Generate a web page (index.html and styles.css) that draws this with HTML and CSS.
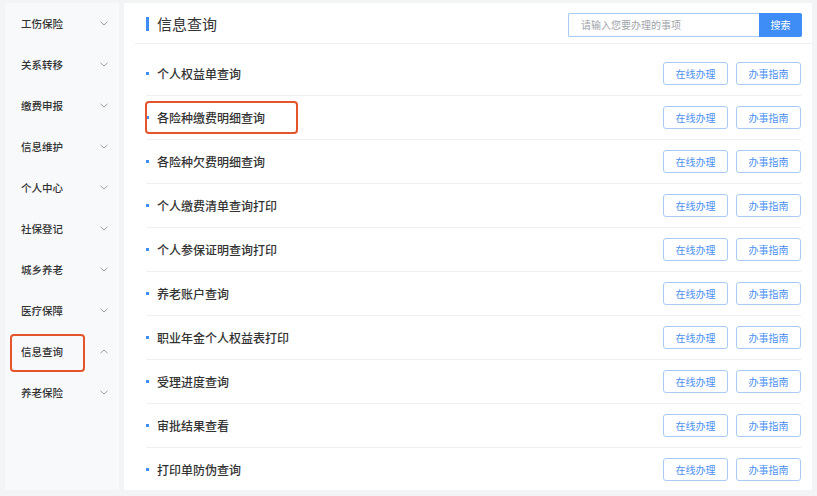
FILE: index.html
```html
<!DOCTYPE html>
<html lang="zh-CN">
<head>
<meta charset="utf-8">
<title>信息查询</title>
<link rel="stylesheet" href="styles.css">
</head>
<body>
<div class="page">
  <aside class="sidebar">
    <ul class="menu">
      <li class="menu-item"><span>工伤保险</span><svg class="chev" viewBox="0 0 8 5"><path d="M0.5 0.8 L4 4 L7.5 0.8"/></svg></li>
      <li class="menu-item"><span>关系转移</span><svg class="chev" viewBox="0 0 8 5"><path d="M0.5 0.8 L4 4 L7.5 0.8"/></svg></li>
      <li class="menu-item"><span>缴费申报</span><svg class="chev" viewBox="0 0 8 5"><path d="M0.5 0.8 L4 4 L7.5 0.8"/></svg></li>
      <li class="menu-item"><span>信息维护</span><svg class="chev" viewBox="0 0 8 5"><path d="M0.5 0.8 L4 4 L7.5 0.8"/></svg></li>
      <li class="menu-item"><span>个人中心</span><svg class="chev" viewBox="0 0 8 5"><path d="M0.5 0.8 L4 4 L7.5 0.8"/></svg></li>
      <li class="menu-item"><span>社保登记</span><svg class="chev" viewBox="0 0 8 5"><path d="M0.5 0.8 L4 4 L7.5 0.8"/></svg></li>
      <li class="menu-item"><span>城乡养老</span><svg class="chev" viewBox="0 0 8 5"><path d="M0.5 0.8 L4 4 L7.5 0.8"/></svg></li>
      <li class="menu-item"><span>医疗保障</span><svg class="chev" viewBox="0 0 8 5"><path d="M0.5 0.8 L4 4 L7.5 0.8"/></svg></li>
      <li class="menu-item active"><span>信息查询</span><svg class="chev" viewBox="0 0 8 5"><path d="M0.5 4.2 L4 1 L7.5 4.2"/></svg><i class="mark mark-side"></i></li>
      <li class="menu-item"><span>养老保险</span><svg class="chev" viewBox="0 0 8 5"><path d="M0.5 0.8 L4 4 L7.5 0.8"/></svg></li>
    </ul>
  </aside>
  <main class="panel">
    <header class="panel-head">
      <h1 class="title">信息查询</h1>
      <form class="search">
        <input class="search-input" type="text" placeholder="请输入您要办理的事项">
        <button class="search-btn" type="button">搜索</button>
      </form>
    </header>
    <ul class="list">
      <li class="row"><span class="name">个人权益单查询</span><div class="ops"><a class="btn">在线办理</a><a class="btn">办事指南</a></div></li>
      <li class="row"><span class="name">各险种缴费明细查询</span><i class="mark mark-row"></i><div class="ops"><a class="btn">在线办理</a><a class="btn">办事指南</a></div></li>
      <li class="row"><span class="name">各险种欠费明细查询</span><div class="ops"><a class="btn">在线办理</a><a class="btn">办事指南</a></div></li>
      <li class="row"><span class="name">个人缴费清单查询打印</span><div class="ops"><a class="btn">在线办理</a><a class="btn">办事指南</a></div></li>
      <li class="row"><span class="name">个人参保证明查询打印</span><div class="ops"><a class="btn">在线办理</a><a class="btn">办事指南</a></div></li>
      <li class="row"><span class="name">养老账户查询</span><div class="ops"><a class="btn">在线办理</a><a class="btn">办事指南</a></div></li>
      <li class="row"><span class="name">职业年金个人权益表打印</span><div class="ops"><a class="btn">在线办理</a><a class="btn">办事指南</a></div></li>
      <li class="row"><span class="name">受理进度查询</span><div class="ops"><a class="btn">在线办理</a><a class="btn">办事指南</a></div></li>
      <li class="row"><span class="name">审批结果查看</span><div class="ops"><a class="btn">在线办理</a><a class="btn">办事指南</a></div></li>
      <li class="row"><span class="name">打印单防伪查询</span><div class="ops"><a class="btn">在线办理</a><a class="btn">办事指南</a></div></li>
    </ul>
  </main>
</div>
</body>
</html>
```

FILE: styles.css
```css
* { box-sizing: border-box; }
html, body { margin: 0; padding: 0; }
body {
  background: #f3f4f6;
  font-family: "Noto Sans CJK SC", "Noto Sans", sans-serif;
  color: #333;
  width: 817px;
  height: 496px;
  overflow: hidden;
}
.page {
  display: flex;
  gap: 5px;
  padding: 3px 5px 0 5px;
  height: 496px;
}
.sidebar {
  width: 114px;
  flex: none;
  background: #f8f9fb;
  height: 487px;
}
.menu {
  list-style: none;
  margin: 0;
  padding: 0;
}
.menu-item {
  position: relative;
  height: 41px;
  display: flex;
  align-items: center;
  justify-content: space-between;
  padding: 0 11px 0 16px;
  font-size: 10.5px;
  font-weight: 500;
  color: #333;
}
.chev {
  width: 8px;
  height: 5px;
  fill: none;
  stroke: #9a9ea6;
  stroke-width: 1;
}
.mark {
  position: absolute;
  border: 2px solid #e5552c;
  border-radius: 4px;
  pointer-events: none;
}
.mark-side {
  left: 5px;
  top: 3px;
  width: 75px;
  height: 38px;
}
.panel {
  flex: 1;
  background: #fff;
  height: 487px;
  overflow: hidden;
}
.panel-head {
  height: 41px;
  margin-left: 11px;
  border-bottom: 1px solid #eef0f3;
  display: flex;
  align-items: center;
  justify-content: space-between;
  padding: 3px 10px 0 11px;
}
.title {
  margin: 0 0 2px 0;
  font-size: 15px;
  font-weight: 400;
  color: #333;
  display: flex;
  align-items: center;
  line-height: 1;
}
.title::before {
  content: "";
  width: 3px;
  height: 14px;
  background: #3e8cf5;
  margin-right: 8px;
}
.search {
  display: flex;
  margin: 0;
  height: 24px;
}
.search-input {
  width: 191px;
  height: 24px;
  border: 1px solid #a9cbf3;
  border-right: none;
  border-radius: 2px 0 0 2px;
  padding: 0 12px;
  font-family: inherit;
  font-size: 10px;
  color: #333;
  outline: none;
}
.search-input::placeholder { color: #a0a4ab; }
.search-btn {
  width: 43px;
  height: 24px;
  border: none;
  background: #3e8cf5;
  color: #fff;
  font-family: inherit;
  font-size: 10px;
  border-radius: 0 2px 2px 0;
  padding: 0;
}
.list {
  list-style: none;
  margin: 8px 11px 0 22px;
  padding: 0;
}
.row {
  position: relative;
  height: 44px;
  border-bottom: 1px solid #eef0f3;
  display: flex;
  align-items: center;
  justify-content: space-between;
}
.name {
  display: flex;
  align-items: center;
  font-size: 12px;
  font-weight: 500;
  color: #333;
}
.name::before {
  content: "";
  width: 3px;
  height: 3px;
  background: #3e8cf5;
  margin-right: 8px;
}
.ops {
  display: flex;
  gap: 8px;
}
.btn {
  width: 65px;
  height: 23px;
  border: 1px solid #a9cbf3;
  border-radius: 3px;
  color: #4a8ff0;
  font-size: 10px;
  display: flex;
  align-items: center;
  justify-content: center;
}
.mark-row {
  left: -1px;
  top: 5px;
  width: 153px;
  height: 33px;
}
```
